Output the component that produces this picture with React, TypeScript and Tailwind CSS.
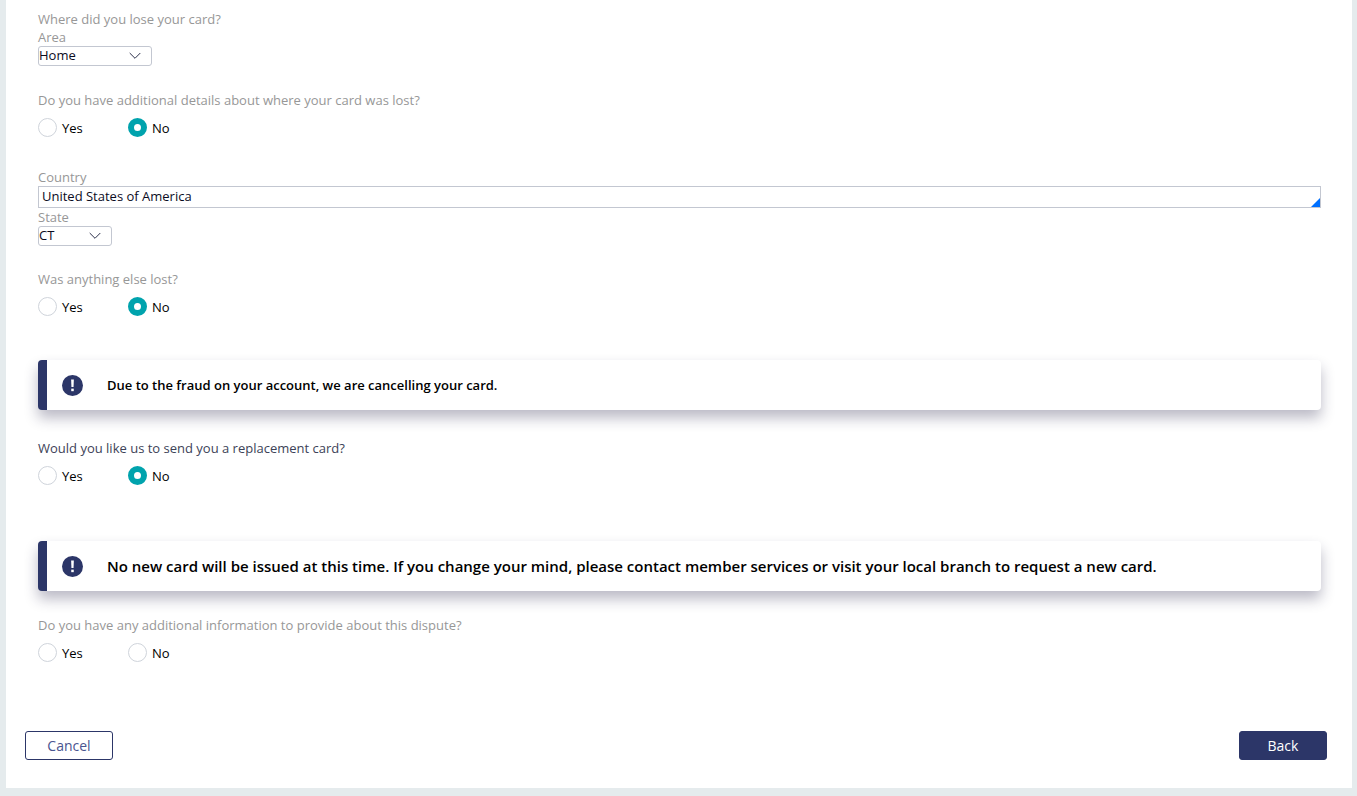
import { useId, useState } from 'react'
import type { ReactNode } from 'react'
import clsx from 'clsx'

type Answer = 'yes' | 'no' | null

function Chevron() {
  return (
    <svg
      aria-hidden="true"
      className="pointer-events-none absolute top-1.5 right-[11px] h-2 w-3"
      fill="none"
      stroke="#2b2f4a"
      viewBox="0 0 12 8"
    >
      <path d="M0.7 1L6 6.3L11.3 1" strokeWidth="1" />
    </svg>
  )
}

interface SelectFieldProps {
  label: string
  options: string[]
  className: string
}

function SelectField({ label, options, className }: SelectFieldProps) {
  const id = useId()

  return (
    <div>
      <label className="block text-[#979797]" htmlFor={id}>
        {label}
      </label>
      <div className={clsx('relative', className)}>
        <select
          className="block h-5 w-full appearance-none rounded-[3px] border border-[#c3c7d1] bg-white pb-0.5 text-[13px] leading-4 text-[#0b0b1e]"
          id={id}
        >
          {options.map((option) => (
            <option key={option}>{option}</option>
          ))}
        </select>
        <Chevron />
      </div>
    </div>
  )
}

interface YesNoQuestionProps {
  question: string
  initial?: Answer
  emphasized?: boolean
}

function YesNoQuestion({
  question,
  initial = null,
  emphasized = false,
}: YesNoQuestionProps) {
  const name = useId()
  const [answer, setAnswer] = useState<Answer>(initial)

  return (
    <fieldset>
      <legend className={emphasized ? 'text-[#3c4257]' : 'text-[#979797]'}>
        {question}
      </legend>
      <div className="mt-[9px] flex">
        {(['yes', 'no'] as const).map((value) => (
          <label
            className="flex h-[19px] w-[90px] items-center gap-[5px] text-black"
            key={value}
          >
            <input
              checked={answer === value}
              className="size-[19px] shrink-0 appearance-none rounded-full border border-[#cfd4db] bg-white checked:border-6 checked:border-[#00a3ad]"
              name={name}
              onChange={() => setAnswer(value)}
              type="radio"
            />
            {value === 'yes' ? 'Yes' : 'No'}
          </label>
        ))}
      </div>
    </fieldset>
  )
}

function Alert({ large, children }: { large?: boolean; children: ReactNode }) {
  return (
    <div
      className="flex min-h-[50px] items-center rounded-[4px] border-l-9 border-[#2c3668] bg-white pl-[15px] shadow-[0_8px_14px_0_rgba(30,28,66,0.3)]"
      role="status"
    >
      <svg
        aria-hidden="true"
        className="size-[21px] shrink-0"
        viewBox="0 0 20 20"
      >
        <circle cx="10" cy="10" fill="#2c3668" r="10" />
        <path d="M8.7 4.3h2.6l-.3 7.2H9z" fill="#fff" />
        <rect fill="#fff" height="2.4" width="2.4" x="8.8" y="13" />
      </svg>
      <p
        className={clsx(
          'ml-6 font-semibold text-black',
          large ? 'text-[15px]' : 'text-[13px]',
        )}
      >
        {children}
      </p>
    </div>
  )
}

export default function App() {
  const countryId = useId()

  return (
    <div className="min-h-screen bg-[#e5ebed] pr-[5px] pb-2 pl-1.5 font-['Open_Sans',sans-serif] text-[13px] leading-[18px]">
      <form
        className="bg-white pt-2.5 pb-7"
        onSubmit={(event) => event.preventDefault()}
      >
        <div className="pr-[31px] pl-8">
          <p className="text-[#979797]">Where did you lose your card?</p>
          <SelectField
            className="w-[114px]"
            label="Area"
            options={['Home', 'Work', 'Other']}
          />

          <div className="mt-[25px]">
            <YesNoQuestion
              initial="no"
              question="Do you have additional details about where your card was lost?"
            />
          </div>

          <div className="mt-[31px]">
            <label className="block text-[#979797]" htmlFor={countryId}>
              Country
            </label>
            <div className="relative">
              <input
                className="block h-[22px] w-full border border-[#c3c7d1] px-[3px] pb-0.5 text-[13px] text-[#0b0b1e]"
                defaultValue="United States of America"
                id={countryId}
                type="text"
              />
              <svg
                aria-hidden="true"
                className="pointer-events-none absolute right-px bottom-px size-[9px]"
                viewBox="0 0 9 9"
              >
                <path d="M9 0V9H0z" fill="#0070ff" />
              </svg>
            </div>
            <SelectField
              className="w-[74px]"
              label="State"
              options={['CT', 'MA', 'NY']}
            />
          </div>

          <div className="mt-6">
            <YesNoQuestion initial="no" question="Was anything else lost?" />
          </div>

          <div className="mt-11">
            <Alert>
              Due to the fraud on your account, we are cancelling your card.
            </Alert>
          </div>

          <div className="mt-[29px]">
            <YesNoQuestion
              emphasized
              initial="no"
              question="Would you like us to send you a replacement card?"
            />
          </div>

          <div className="mt-14">
            <Alert large>
              No new card will be issued at this time. If you change your mind,
              please contact member services or visit your local branch to
              request a new card.
            </Alert>
          </div>

          <div className="mt-[25px]">
            <YesNoQuestion question="Do you have any additional information to provide about this dispute?" />
          </div>
        </div>

        <div className="mt-[69px] flex justify-between pr-[25px] pl-[19px] text-[14px]">
          <button
            className="h-[29px] w-[88px] rounded-[3px] border border-[#2c3668] bg-white text-[#4a5590]"
            type="button"
          >
            Cancel
          </button>
          <button
            className="h-[29px] w-[88px] rounded-[3px] border border-[#2c3668] bg-[#2c3668] font-medium text-white"
            type="button"
          >
            Back
          </button>
        </div>
      </form>
    </div>
  )
}
